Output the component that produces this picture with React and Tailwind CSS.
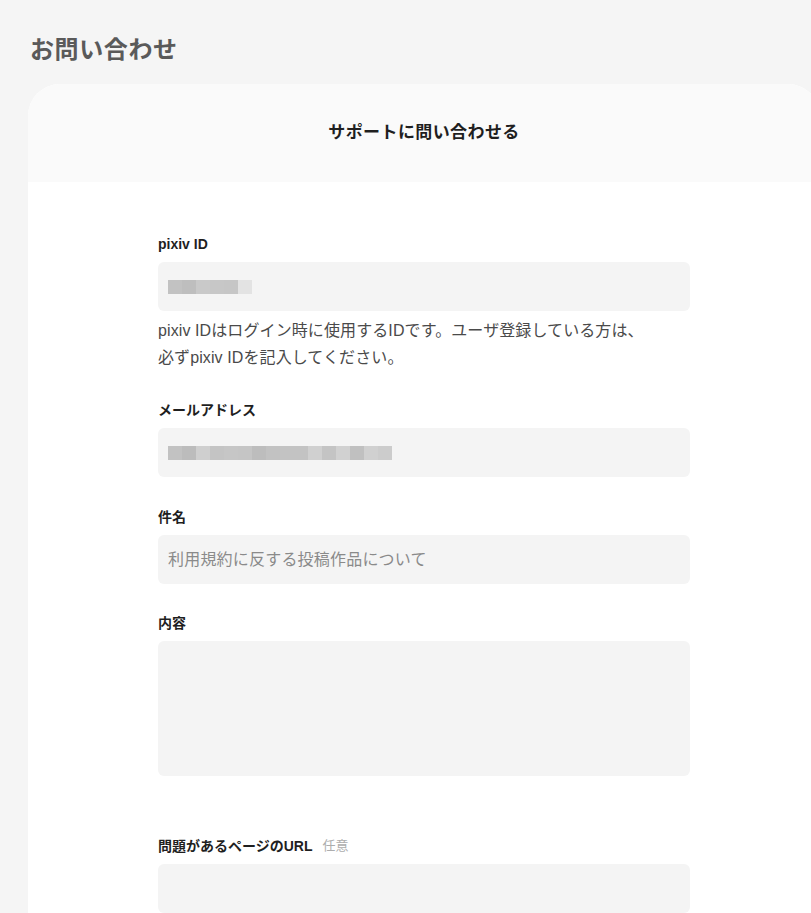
import React from "react";

const FONT = { fontFamily: '"Liberation Sans", "Noto Sans CJK JP", sans-serif' };

// Masked values shown as pixel mosaics
function Mosaic({ cells }) {
  return (
    <div className="flex h-[14px]">
      {cells.map((c, i) => (
        <div key={i} className={`h-full w-[14px] ${c}`} />
      ))}
    </div>
  );
}

const idCells = [
  "bg-[#c2c2c2]",
  "bg-[#bebebe]",
  "bg-[#c9c9c9]",
  "bg-[#c7c7c7]",
  "bg-[#c6c6c6]",
  "bg-[#e3e3e3]",
];

const mailCells = [
  "bg-[#c2c2c2]",
  "bg-[#bcbcbc]",
  "bg-[#cfcfcf]",
  "bg-[#c4c4c4]",
  "bg-[#c6c6c6]",
  "bg-[#c5c5c5]",
  "bg-[#bdbdbd]",
  "bg-[#c2c2c2]",
  "bg-[#c3c3c3]",
  "bg-[#c3c3c3]",
  "bg-[#d0d0d0]",
  "bg-[#c4c4c4]",
  "bg-[#d1d1d1]",
  "bg-[#c0c0c0]",
  "bg-[#d0d0d0]",
  "bg-[#cccccc]",
];

function Label({ children }) {
  return (
    <div className="mb-2 flex items-center gap-[10px] text-[14px] font-bold leading-[20px] text-[#1f1f1f]">
      {children}
    </div>
  );
}

function Field({ children }) {
  return (
    <div className="flex h-[49px] items-center rounded-md bg-[#f4f4f4] px-[10px]">
      {children}
    </div>
  );
}

export default function App() {
  return (
    <div className="min-h-screen overflow-hidden bg-[#f5f5f5]" style={FONT}>
      <div className="w-[848px] px-[28px]">
        <h1 className="pl-[2px] pt-[34px] text-[24px] font-bold leading-[32px] tracking-[0.6px] text-[#5a5a5a]">
          お問い合わせ
        </h1>

        <div className="mt-[18px] overflow-hidden rounded-t-[32px] bg-white">
          <div className="flex h-[98px] items-center justify-center bg-[#fafafa] text-[17px] font-bold tracking-[0.4px] text-[#1f1f1f]">
            サポートに問い合わせる
          </div>

          <div className="mx-auto w-[532px] pb-[80px] pt-[52px]">
            <Label>pixiv ID</Label>
            <Field>
              <Mosaic cells={idCells} />
            </Field>
            <p className="mt-[6px] text-[16px] leading-[27px] tracking-[0.1px] text-[#4a4a4a]">
              pixiv IDはログイン時に使用するIDです。ユーザ登録している方は、
              <br />
              必ずpixiv IDを記入してください。
            </p>

            <div className="mt-[29px]">
              <Label>メールアドレス</Label>
              <Field>
                <Mosaic cells={mailCells} />
              </Field>
            </div>

            <div className="mt-[30px]">
              <Label>件名</Label>
              <Field>
                <span className="text-[16px] tracking-[0.2px] text-[#8a8a8a]">
                  利用規約に反する投稿作品について
                </span>
              </Field>
            </div>

            <div className="mt-[29px]">
              <Label>内容</Label>
              <div className="h-[135px] rounded-md bg-[#f4f4f4]" />
            </div>

            <div className="mt-[60px]">
              <Label>
                <span>問題があるページのURL</span>
                <span className="text-[13px] font-normal text-[#adadad]">任意</span>
              </Label>
              <Field />
            </div>
          </div>
        </div>
      </div>
    </div>
  );
}
